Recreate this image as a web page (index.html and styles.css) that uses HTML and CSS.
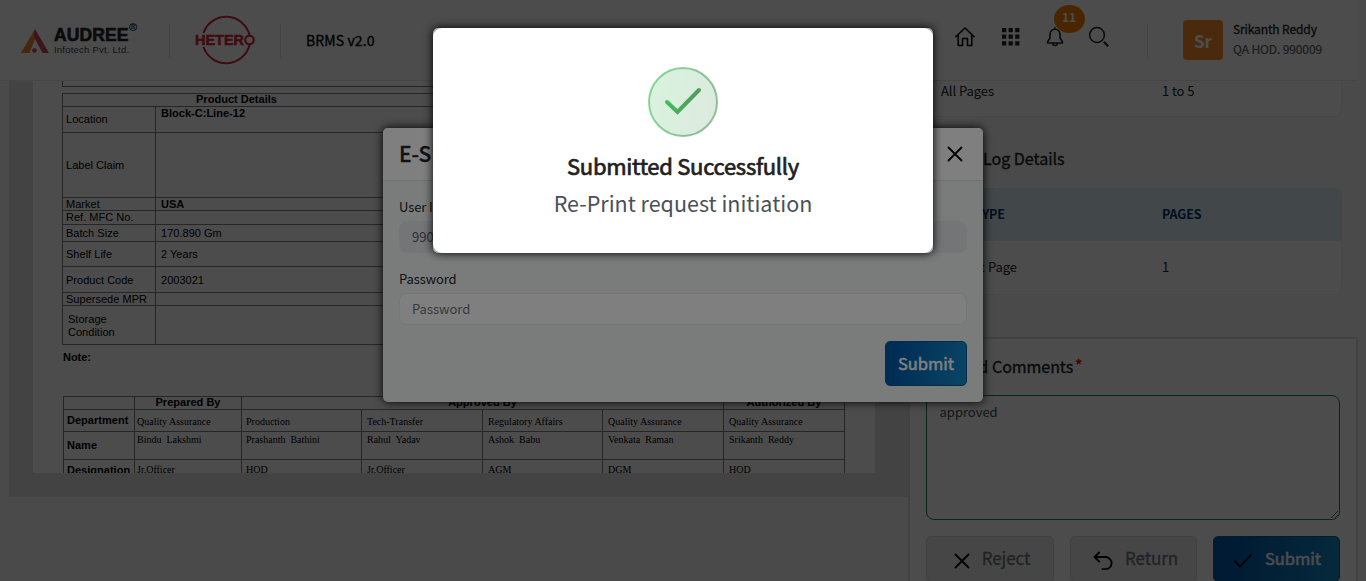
FILE: index.html
```html
<!DOCTYPE html>
<html lang="en">
<head>
<meta charset="utf-8">
<title>BRMS v2.0</title>
<link rel="stylesheet" href="styles.css">
</head>
<body>
<div class="app">
  <header class="topbar">
    <div class="brand">
      <svg class="brand-mark" width="28" height="24" viewBox="0 0 28 24"><path d="M14 0 0 24h8.500L14 10z" fill="#e8862c"/><path d="M14 0 28 24h-6.500L13 8z" fill="#d0455e"/><circle cx="13.500" cy="21.500" r="2.300" fill="#d0455e"/></svg>
      <div class="brand-text"><div class="brand-name">AUDREE<sup>®</sup></div><div class="brand-sub">Infotech Pvt. Ltd.</div></div>
    </div>
    <span class="rule rule-a"></span>
    <svg class="hetero" width="62" height="52" viewBox="0 0 62 52"><path d="M8.500 19A24 24 0 0 1 54.500 21M8.500 33A24 24 0 0 0 54.500 31" fill="none" stroke="#d62839" stroke-width="2"/><text x="0" y="31" textLength="49" lengthAdjust="spacingAndGlyphs" class="hetero-text">HETER</text><circle cx="54.500" cy="26" r="4.300" fill="none" stroke="#d62839" stroke-width="2.300"/></svg>
    <span class="rule rule-b"></span>
    <span class="product">BRMS v2.0</span>
    <nav class="tools">
      <svg width="20" height="20" viewBox="0 0 20 20" fill="none" stroke="#000" stroke-width="1.500" stroke-linejoin="round" stroke-linecap="round"><path d="M.8 9.800 10 1l9.200 8.800M3.200 8v10.500h4.300v-7h5v7h4.300V8"/></svg>
      <svg width="18" height="18" viewBox="0 0 18 18" fill="#222"><path d="M0 0h4.200v4.200H0zM6.600 0h4.200v4.200H6.600zM13.200 0h4.200v4.200h-4.200zM0 6.600h4.200v4.200H0zM6.600 6.600h4.200v4.200H6.600zM13.200 6.600h4.200v4.200h-4.200zM0 13.200h4.200v4.200H0zM6.600 13.200h4.200v4.200H6.600zM13.200 13.200h4.200v4.200h-4.200z"/></svg>
      <span class="bell"><svg width="18" height="20" viewBox="0 0 18 20" fill="none" stroke="#222" stroke-width="1.600" stroke-linejoin="round"><path d="M9 2.200C5.800 2.200 4 4.600 4 7.500V11l-2.400 3.700V16h14.800v-1.300L14 11V7.500c0-2.900-1.800-5.300-5-5.300zM9 2V.3M6.500 16.300c.2 3 4.800 3 5 0"/></svg><b class="count">11</b></span>
      <svg width="22" height="22" viewBox="0 0 22 22" fill="none" stroke="#222"><circle cx="9" cy="9" r="7.400" stroke-width="1.500"/><path d="m15.800 15.800 4.400 4.400" stroke-width="2.200"/></svg>
    </nav>
    <span class="rule rule-c"></span>
    <div class="avatar">Sr</div>
    <div class="user"><div class="user-name">Srikanth Reddy</div><div class="user-role">QA HOD. 990009</div></div>
  </header>

  <main class="content">
    <section class="viewer">
      <div class="sheet">
        <div class="prev-box"></div>
        <div class="details">
          <div class="row r-title"><b>Product Details</b></div>
          <div class="row r-loc"><span>Location</span><b>Block-C:Line-12</b></div>
          <div class="row r-claim"><span>Label Claim</span><b></b></div>
          <div class="row r-13"><span>Market</span><b>USA</b></div>
          <div class="row r-14"><span>Ref. MFC No.</span><i></i></div>
          <div class="row r-17"><span>Batch Size</span><i>170.890 Gm</i></div>
          <div class="row r-25"><span>Shelf Life</span><i>2 Years</i></div>
          <div class="row r-26"><span>Product Code</span><i>2003021</i></div>
          <div class="row r-13"><span>Supersede MPR</span><i></i></div>
          <div class="row r-39"><span class="storage">Storage<br>Condition</span><i></i></div>
        </div>
        <div class="note">Note:</div>
        <div class="signoff">
          <b class="h"></b><b class="h">Prepared By</b><b class="h span4">Approved By</b><b class="h">Authorized By</b>
          <b>Department</b><span>Quality Assurance</span><span>Production</span><span>Tech-Transfer</span><span>Regulatory Affairs</span><span>Quality Assurance</span><span>Quality Assurance</span>
          <b>Name</b><span class="n">Bindu&nbsp; Lakshmi</span><span class="n">Prashanth&nbsp; Bathini</span><span class="n">Rahul&nbsp; Yadav</span><span class="n">Ashok&nbsp; Babu</span><span class="n">Venkata&nbsp; Raman</span><span class="n">Srikanth&nbsp; Reddy</span>
          <b class="last">Designation</b><span class="last">Jr.Officer</span><span class="last">HOD</span><span class="last">Jr.Officer</span><span class="last">AGM</span><span class="last">DGM</span><span class="last">HOD</span>
        </div>
      </div>
    </section>

    <aside class="side">
      <div class="card first"><span>All Pages</span><span>1 to 5</span></div>
      <h3 class="log-title"><span class="lead">Re-Print</span>Log Details</h3>
      <div class="log-head"><span class="type">PAGE TYPE</span><span>PAGES</span></div>
      <div class="card second"><span class="spec">Specific Page</span><span>1</span></div>
      <div class="comments">
        <h3 class="comments-title"><span class="lead2">Add</span>Comments<em>*</em></h3>
        <textarea class="comment-box">approved</textarea>
        <div class="actions">
          <button class="btn plain"><svg width="16" height="16" viewBox="0 0 16 16"><path d="m1.500 1.500 13 13m0-13-13 13" stroke="#000" stroke-width="1.800" stroke-linecap="round"/></svg>Reject</button>
          <button class="btn plain"><svg width="20" height="20" viewBox="0 0 20 20" fill="none" stroke="#000" stroke-width="1.800" stroke-linecap="round" stroke-linejoin="round"><path d="M6.200 1.500 1.500 6l4.700 4.500M1.800 6H12.500a6.100 6.100 0 0 1 0 12.200H9.500"/></svg>Return</button>
          <button class="btn primary"><svg width="20" height="16" viewBox="0 0 20 16"><path d="m2 8.500 5 5L18 2" fill="none" stroke="#000" stroke-width="1.800" stroke-linecap="round"/></svg>Submit</button>
        </div>
      </div>
    </aside>
  </main>
</div>

<div class="backdrop first-dim">
  <div class="esign">
    <div class="esign-head"><h2>E-Signature</h2><svg width="16" height="16" viewBox="0 0 16 16"><path d="m1.500 1.500 13 13m0-13-13 13" stroke="#000" stroke-width="1.800" stroke-linecap="round"/></svg></div>
    <div class="esign-body">
      <label>User ID</label>
      <div class="field locked">990009</div>
      <label class="second-label">Password</label>
      <div class="field">Password</div>
      <button class="btn primary send">Submit</button>
    </div>
  </div>
</div>

<div class="backdrop second-dim">
  <div class="success"><div class="success-inner">
    <svg width="70" height="70" viewBox="0 0 70 70"><defs><linearGradient id="g" x1="0" y1="0" x2="1" y2="0.300"><stop offset="0" stop-color="#3fc458"/><stop offset="1" stop-color="#519a5e"/></linearGradient></defs><circle cx="35" cy="35" r="34" fill="url(#g)" fill-opacity=".2" stroke="url(#g)" stroke-opacity=".6" stroke-width="2"/><path d="M19 35 29.500 45 51 23" fill="none" stroke="url(#g)" stroke-width="4" stroke-linecap="round"/></svg>
    <h2>Submitted Successfully</h2>
    <p>Re-Print request initiation</p>
  </div></div>
</div>
</body>
</html>
```
FILE: styles.css
```css
* { box-sizing: border-box; }
body { margin: 0; height: 581px; overflow: hidden; background: #f8f8f8; color: #212529; font-family: "Noto Sans CJK SC", "Noto Sans", sans-serif; font-size: 13px; line-height: 20px; }
h2, h3, p { margin: 0; }
.app { height: 581px; overflow: hidden; white-space: nowrap; }

/* top bar */
.topbar { display: flex; align-items: center; width: 1358px; height: 81px; background: #fdfdfd; border-bottom: 1px solid #e8e8e8; padding-left: 21px; }
.brand { display: flex; width: 148px; align-items: center; padding-top: 1px; }
.brand-text { margin-left: 5px; width: 90px; }
.brand-name { font: bold 17.5px/17px "Liberation Sans", sans-serif; position: relative; letter-spacing: .1px; -webkit-text-stroke: .6px #212529; padding-top: 1px; }
.brand-name sup { position: absolute; left: 75px; top: -7px; font-size: 11px; font-weight: normal; -webkit-text-stroke: .2px #212529; }
.brand-sub { font: 9.5px/11px "Liberation Sans", sans-serif; letter-spacing: .22px; color: #444; }
.rule { width: 1px; height: 35px; background: #e4e4e4; }
.hetero { margin-left: 25px; }
.hetero-text { font: bold 14px "Liberation Sans", sans-serif; fill: #d62839; stroke: #d62839; stroke-width: .5px; }
.rule-b { margin-left: 23px; }
.product { margin-left: 25px; width: 90px; font-size: 14px; color: #000; letter-spacing: .1px; -webkit-text-stroke: .3px #000; }
.tools { display: flex; align-items: center; gap: 27px; margin-left: 559px; width: 156px; height: 20px; margin-bottom: 6px; }
.bell { position: relative; height: 20px; margin-left: -1px; }
.tools > svg { flex: none; }
.tools > svg:last-child { margin-left: -3px; }
.count { position: absolute; left: 8px; top: -22px; width: 31px; height: 28px; border-radius: 50%; background: #f98000; color: #fff; font-size: 12px; line-height: 24px; text-align: center; padding-right: 1px; }
.rule-c { margin-left: 36px; }
.avatar { margin-left: 35px; width: 40px; height: 40px; border-radius: 4px; background: #fb8a2e; color: #fff; font-size: 17px; font-weight: bold; line-height: 41px; text-align: center; }
.user { margin-left: 10px; font-size: 12px; margin-top: -2px; letter-spacing: -.12px; }
.user-name { -webkit-text-stroke: .3px #212529; }
.user-role { color: #5c646b; -webkit-text-stroke: .2px #5c646b; }

/* document viewer */
.content { display: flex; height: 500px; }
.viewer { margin-left: 9px; width: 899px; height: 416px; background: #e2e2e2; padding-left: 24px; }
.sheet { width: 842px; height: 392px; overflow: hidden; background: #fdfdfd; padding-left: 29px; font: 11px/13px "Liberation Sans", sans-serif; color: #000; letter-spacing: .02px; }
.prev-box { width: 782px; height: 6px; border: 1px solid #777; border-top: 0; }
.details { margin-top: 6px; width: 782px; border: 1px solid #808080; border-bottom: 0; }
.row { display: grid; grid-template-columns: 93px 1fr; border-bottom: 1px solid #808080; }
.row > * { display: flex; align-items: center; font-style: normal; }
.row > :first-child { padding-left: 3px; border-right: 1px solid #808080; }
.row > :last-child { padding-left: 5px; }
.r-title { height: 13px; grid-template-columns: 1fr; }
.r-title > b:last-child { padding-left: 133px; border: 0; line-height: 11px; height: 11px; }
.r-loc { height: 26px; }
.r-loc > b { align-items: flex-start; }
.r-claim { height: 65px; }
.r-13 { height: 13px; }
.r-14 { height: 14px; }
.r-17 { height: 17px; }
.r-25 { height: 25px; }
.r-26 { height: 26px; }
.r-26 > * { padding-top: 2px; }
.r-39 { height: 39px; }
.row > .storage { padding: 2px 0 0 5px; }
.note { margin: 6px 0 0 1px; font-weight: bold; letter-spacing: -.05px; }
.signoff { display: grid; grid-template-columns: 71px 107px 120px 121px 120px 121px 121px; grid-template-rows: 13px 22px 28px 26px; margin: 32px 0 0 1px; width: 782px; border-top: 1px solid #808080; border-left: 1px solid #808080; }
.signoff > * { border-right: 1px solid #808080; border-bottom: 1px solid #808080; padding-left: 3px; display: flex; align-items: center; }
.signoff > .h { padding: 0; justify-content: center; line-height: 11px; padding-bottom: 2px; }
.signoff .span4 { grid-column: span 4; }
.signoff span { font: 10px/12px "Liberation Serif", serif; padding: 3px 0 0 5px; letter-spacing: 0; }
.signoff .n { align-items: flex-start; padding-top: 2px; }
.signoff > b.last { align-items: flex-start; padding-top: 4px; }
.signoff > span.last { align-items: flex-start; padding-top: 4px; }
.signoff span:nth-of-type(6n+1) { padding-left: 2px; }
.signoff span:nth-of-type(6n+2) { padding-left: 4px; }

/* right column */
.side { width: 450px; height: 500px; font-size: 13px; letter-spacing: -.07px; }
.card, .log-head { display: grid; grid-template-columns: 221px 1fr; align-items: center; margin-left: 18px; width: 416px; padding-left: 15px; }
.card { background: #fdfdfd; border: 1px solid #f0f0f0; border-top: 0; border-radius: 0 0 8px 8px; padding-left: 14px; }
.first { height: 36px; padding-bottom: 20px; }
.log-title { display: flex; margin: 31px 0 0 18px; height: 20px; font-size: 16px; font-weight: normal; letter-spacing: 0; -webkit-text-stroke: .35px #212529; }
.lead { width: 57px; font-size: 14px; }
.log-head { margin-top: 20px; height: 53px; padding-bottom: 1px; background: #dcedf7; border-radius: 8px 8px 0 0; color: #00356b; font-size: 12.500px; font-weight: bold; }
.second { height: 54px; padding-bottom: 1px; }
.type, .spec { width: 64px; display: flex; justify-content: flex-end; }
.spec { width: 76px; }
.comments { margin-top: 42px; width: 450px; height: 260px; border: 2px solid #dedede; background: #fdfdfd; padding: 17px 16px; }
.comments-title { display: flex; height: 20px; font-size: 16px; font-weight: normal; letter-spacing: -.05px; -webkit-text-stroke: .35px #212529; }
.lead2 { width: 66px; padding-right: 4px; text-align: right; }
.comments-title em { color: #f00; font-style: normal; margin-left: 2px; margin-top: -1px; -webkit-text-stroke: .4px #f00; }
.comment-box { display: block; margin-top: 19px; width: 414px; height: 125px; border: 1px solid #198754; border-radius: 8px; padding: 6px 12.500px; background: transparent; color: #495057; font: 13px/20px "Noto Sans CJK SC", "Noto Sans", sans-serif; outline: 0; }
.actions { display: grid; grid-template-columns: 128px 127px 127px; gap: 16px; margin-top: 16px; }
.btn { display: flex; align-items: center; justify-content: center; gap: 12px; height: 46px; border: 1px solid #d2d5d9; border-radius: 5px; background: #e9ebef; color: #6c757d; font: 17px/20px "Noto Sans CJK SC", "Noto Sans", sans-serif; padding: 0 0 2px; }
.btn svg { margin-top: 5px; }
.plain { padding-left: 4px; -webkit-text-stroke: .3px #6c757d; letter-spacing: -.1px; }
.primary { padding-left: 1px; border-color: #055b9e; background: linear-gradient(100deg, #005bac 15%, #148bc8); color: #fff; font-size: 16.500px; -webkit-text-stroke: .5px #fff; }

/* dialogs */
.backdrop { position: absolute; inset: 0; display: flex; justify-content: center; align-items: flex-start; white-space: nowrap; }
.first-dim { background: rgba(0,0,0,.4); padding-top: 128px; }
.second-dim { background: rgba(0,0,0,.5); padding-top: 28px; }
.esign { width: 600px; height: 274px; border-radius: 5px; overflow: hidden; background: #f5f9f7; box-shadow: 0 0 10px #000; }
.esign-head { height: 53px; display: flex; align-items: center; justify-content: space-between; padding: 0 20px 0 16px; background: #fff; border-bottom: 1px solid #e0e5e5; }
.esign-head h2 { font-size: 21px; line-height: 28px; margin-top: -2px; font-weight: 500; -webkit-text-stroke: .3px #212529; }
.esign-body { padding: 16px; display: flex; flex-direction: column; letter-spacing: -.1px; }
.second-label { margin-top: 16px; }
.field { margin-top: 4px; height: 32px; line-height: 30px; padding-left: 12px; border: 1px solid #e9edef; border-radius: 8px; background: #fff; color: #6c757d; letter-spacing: 0; }
.locked { background: #e9eaee; border-color: #e9eaee; color: #5b636b; }
.send { width: 82px; height: 45px; align-self: flex-end; margin-top: 16px; padding: 0 0 1px; }
.success { width: 500px; height: 225px; background: #aaa; border-radius: 5px; box-shadow: 0 0 10px #000; }
.success-inner { height: 225px; border-radius: 9px; background: #fff; display: flex; flex-direction: column; align-items: center; padding-top: 39px; }
.success h2 { margin-top: 12px; font-size: 22px; line-height: 32px; font-weight: normal; letter-spacing: -.28px; color: #212121; -webkit-text-stroke: .7px #212121; }
.success p { margin-top: 6px; font-size: 21.5px; line-height: 32px; color: #495057; }
```
